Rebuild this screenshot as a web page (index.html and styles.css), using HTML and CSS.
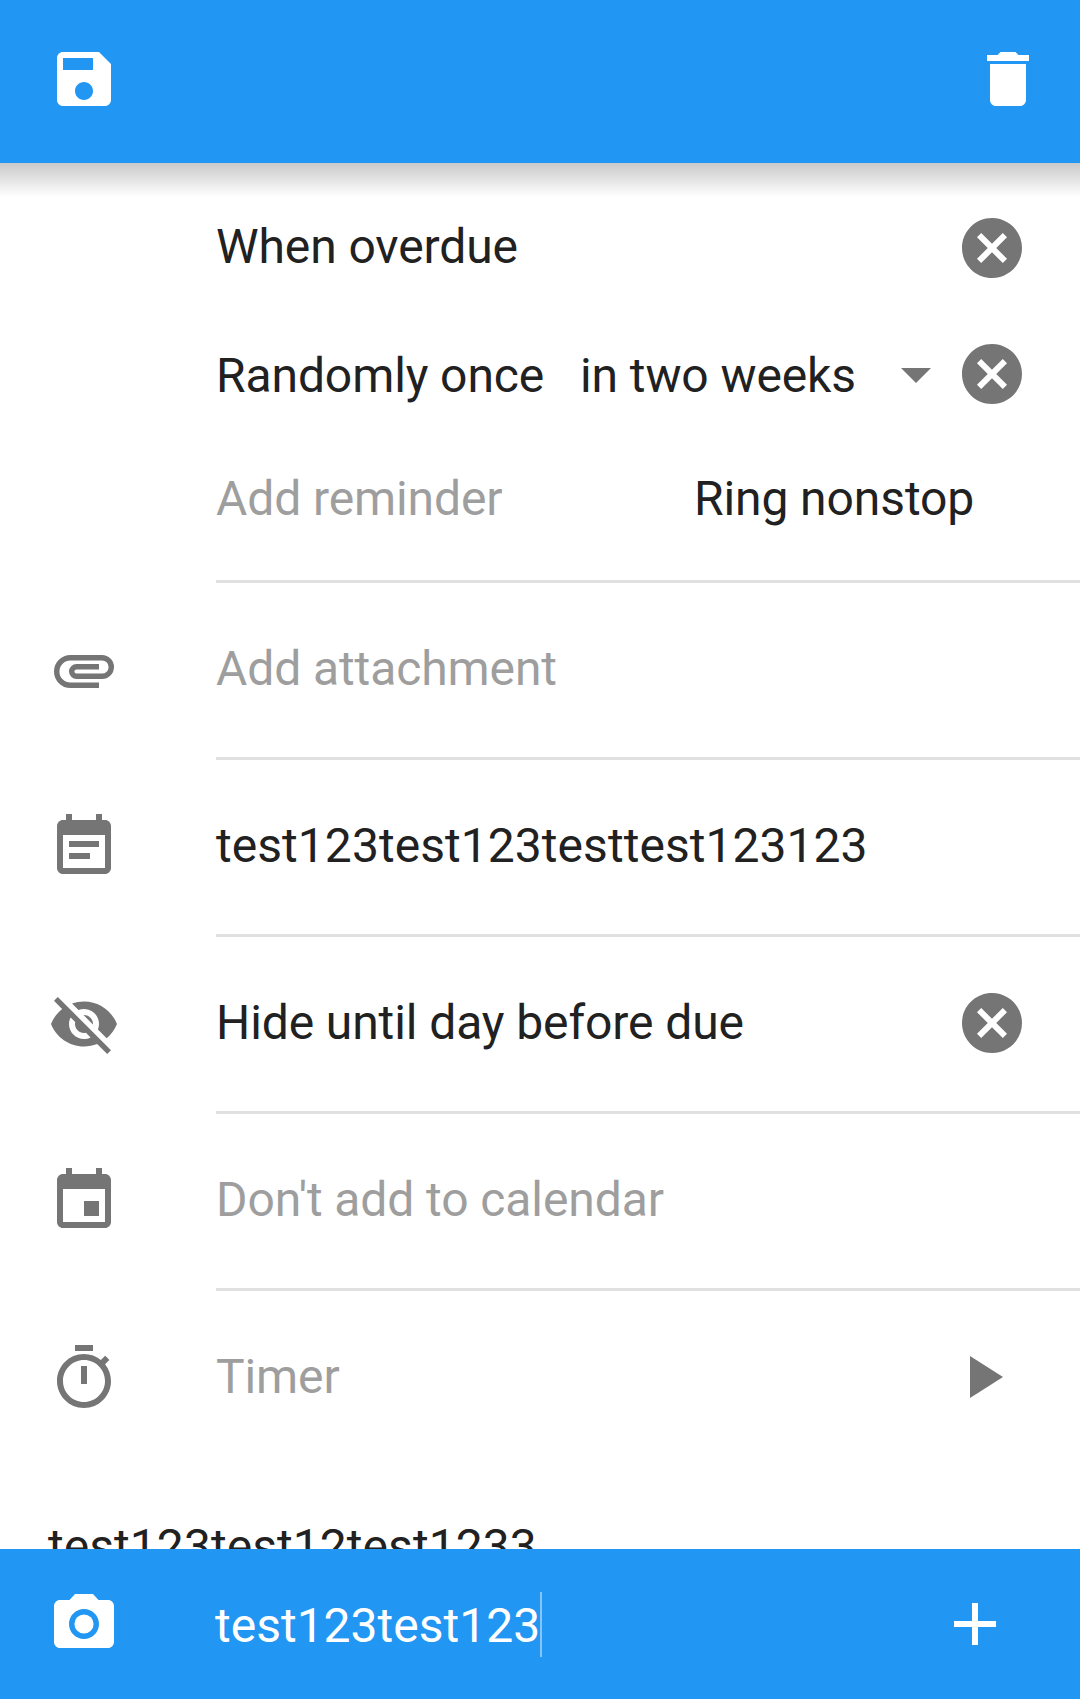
FILE: index.html
```html
<!DOCTYPE html>
<html lang="en">
<head>
    <meta charset="UTF-8">
    <meta name="viewport" content="width=device-width, initial-scale=1.0">
    <title>Edit task</title>
    <link rel="stylesheet" href="styles.css">
</head>
<body>
    <div class="page">
        <header class="toolbar">
            <svg class="icon icon-white" viewBox="0 0 24 24"><path d="M17 3H5c-1.11 0-2 .9-2 2v14c0 1.1.89 2 2 2h14c1.1 0 2-.9 2-2V7l-4-4zm-5 16c-1.66 0-3-1.34-3-3s1.34-3 3-3 3 1.34 3 3-1.34 3-3 3zm3-10H5V5h10v4z"/></svg>
            <svg class="icon icon-white" viewBox="0 0 24 24"><path d="M6 19c0 1.1.9 2 2 2h8c1.1 0 2-.9 2-2V7H6v12zM19 4h-3.5l-1-1h-5l-1 1H5v2h14V4z"/></svg>
        </header>

        <main class="content">
            <!-- Reminders -->
            <section class="reminders">
                <div class="reminder-row reminder-overdue">
                    <span class="label label-up">When overdue</span>
                    <svg class="icon clear" viewBox="0 0 24 24"><path d="M12 2C6.47 2 2 6.47 2 12s4.47 10 10 10 10-4.47 10-10S17.53 2 12 2zm5 13.59L15.59 17 12 13.41 8.41 17 7 15.59 10.59 12 7 8.41 8.41 7 12 10.59 15.59 7 17 8.41 13.41 12 17 15.59z"/></svg>
                </div>
                <div class="reminder-row reminder-random">
                    <span class="label label-down random-label">Randomly once</span>
                    <span class="label label-down">in two weeks</span>
                    <svg class="icon dropdown" viewBox="0 0 24 24"><path d="M7 10l5 5 5-5z"/></svg>
                    <svg class="icon" viewBox="0 0 24 24"><path d="M12 2C6.47 2 2 6.47 2 12s4.47 10 10 10 10-4.47 10-10S17.53 2 12 2zm5 13.59L15.59 17 12 13.41 8.41 17 7 15.59 10.59 12 7 8.41 8.41 7 12 10.59 15.59 7 17 8.41 13.41 12 17 15.59z"/></svg>
                </div>
                <div class="reminder-row reminder-add">
                    <span class="label hint add-label">Add reminder</span>
                    <span class="label">Ring nonstop</span>
                </div>
            </section>

            <div class="row">
                <svg class="icon clip" viewBox="0 0 24 24"><path d="M17 17.1H7.5a4.6 4.6 0 0 1 0-9.2H18a3.1 3.1 0 0 1 0 6.2H9.5a1.6 1.6 0 0 1 0-3.2H17"/></svg>
                <div class="row-body"><span class="label hint">Add attachment</span></div>
            </div>

            <div class="row">
                <svg class="icon" viewBox="0 0 24 24"><path d="M17 10H7v2h10v-2zm2-7h-1V1h-2v2H8V1H6v2H5c-1.11 0-1.99.9-1.99 2L3 19c0 1.1.89 2 2 2h14c1.1 0 2-.9 2-2V5c0-1.1-.9-2-2-2zm0 16H5V8h14v11zm-5-5H7v2h7v-2z"/></svg>
                <div class="row-body"><span class="label digits">test123test123testtest123123</span></div>
            </div>

            <div class="row">
                <svg class="icon" viewBox="0 0 24 24"><path d="M12 7c2.76 0 5 2.24 5 5 0 .65-.13 1.26-.36 1.83l2.92 2.92c1.51-1.26 2.7-2.89 3.43-4.75-1.73-4.39-6-7.5-11-7.5-1.4 0-2.74.25-3.98.7l2.16 2.16C10.74 7.13 11.35 7 12 7zM2 4.27l2.28 2.28.46.46C3.08 8.3 1.78 10.02 1 12c1.73 4.39 6 7.5 11 7.5 1.55 0 3.03-.3 4.38-.84l.42.42L19.73 22 21 20.73 3.27 3 2 4.27zM7.53 9.8l1.55 1.55c-.05.21-.08.43-.08.65 0 1.66 1.34 3 3 3 .22 0 .44-.03.65-.08l1.55 1.55c-.67.33-1.41.53-2.2.53-2.76 0-5-2.24-5-5 0-.79.2-1.53.53-2.2zm4.31-.78l3.15 3.15.02-.16c0-1.66-1.34-3-3-3l-.17.01z"/></svg>
                <div class="row-body">
                    <span class="label">Hide until day before due</span>
                    <svg class="icon clear" viewBox="0 0 24 24"><path d="M12 2C6.47 2 2 6.47 2 12s4.47 10 10 10 10-4.47 10-10S17.53 2 12 2zm5 13.59L15.59 17 12 13.41 8.41 17 7 15.59 10.59 12 7 8.41 8.41 7 12 10.59 15.59 7 17 8.41 13.41 12 17 15.59z"/></svg>
                </div>
            </div>

            <div class="row">
                <svg class="icon" viewBox="0 0 24 24"><path d="M17 12h-5v5h5v-5zM16 1v2H8V1H6v2H5c-1.11 0-1.99.9-1.99 2L3 19c0 1.1.89 2 2 2h14c1.1 0 2-.9 2-2V5c0-1.1-.9-2-2-2h-1V1h-2zm3 18H5V8h14v11z"/></svg>
                <div class="row-body"><span class="label hint">Don't add to calendar</span></div>
            </div>

            <div class="row">
                <svg class="icon" viewBox="0 0 24 24"><path d="M15 1H9v2h6V1zm-4 13h2V8h-2v6zm8.03-6.61l1.42-1.42c-.43-.51-.9-.99-1.41-1.41l-1.42 1.42C16.07 4.74 14.12 4 12 4c-4.97 0-9 4.03-9 9s4.02 9 9 9 9-4.03 9-9c0-2.12-.74-4.07-1.97-5.61zM12 20c-3.87 0-7-3.13-7-7s3.13-7 7-7 7 3.13 7 7-3.13 7-7 7z"/></svg>
                <div class="row-body row-last">
                    <span class="label hint">Timer</span>
                    <svg class="icon play" viewBox="0 0 24 24"><path d="M8 5v14l11-7z"/></svg>
                </div>
            </div>

            <p class="task-note">test123test12test1233</p>
        </main>

        <footer class="quick-add">
            <svg class="icon icon-white" viewBox="0 0 24 24"><path d="M9 2L7.17 4H4c-1.1 0-2 .9-2 2v12c0 1.1.9 2 2 2h16c1.1 0 2-.9 2-2V6c0-1.1-.9-2-2-2h-3.17L15 2H9zm3 15c-2.76 0-5-2.24-5-5s2.24-5 5-5 5 2.24 5 5-2.24 5-5 5z"/><circle cx="12" cy="12" r="3.2"/></svg>
            <div class="quick-input">test123test123<span class="caret"></span></div>
            <svg class="icon icon-white" viewBox="0 0 24 24"><path d="M19 13h-6v6h-2v-6H5v-2h6V5h2v6h6v2z"/></svg>
        </footer>
    </div>
</body>
</html>
```

FILE: styles.css
```css
html, body {
    margin: 0;
    padding: 0;
    background-color: #fff;
}

body {
    font-family: Roboto, "Noto Sans", sans-serif;
}

.page {
    display: flex;
    flex-direction: column;
    height: 1699px;
    overflow: hidden;
}

.icon {
    width: 72px;
    height: 72px;
    flex-shrink: 0;
    fill: #757575;
}

.icon-white {
    fill: #fff;
}

.clip {
    fill: none;
    stroke: #757575;
    stroke-width: 1.8;
}

.toolbar {
    position: relative;
    z-index: 1;
    display: flex;
    justify-content: space-between;
    height: 163px;
    box-sizing: border-box;
    padding: 43px 36px 0 48px;
    background-color: #2196f3;
}

.toolbar::after {
    content: "";
    position: absolute;
    top: 100%;
    left: 0;
    right: 0;
    height: 34px;
    background: linear-gradient(rgba(0, 0, 0, 0.21), rgba(0, 0, 0, 0));
}

.content {
    flex: 1;
    min-height: 0;
    overflow: hidden;
}

.label {
    font-size: 48px;
    line-height: 64px;
    letter-spacing: -0.1px;
    color: #212121;
    white-space: nowrap;
}

.label-up {
    padding-bottom: 3px;
}

.label-down {
    padding-top: 3px;
}

.digits {
    letter-spacing: 0.05px;
}

.hint {
    color: #9e9e9e;
}

/* Reminders */
.reminders {
    margin-left: 216px;
    padding-top: 21px;
    height: 396px;
    border-bottom: 3px solid #e0e0e0;
}

.reminder-row {
    display: flex;
    align-items: center;
    padding-right: 52px;
}

.reminder-overdue {
    height: 128px;
}

.reminder-random {
    height: 124px;
}

.reminder-add {
    height: 125px;
}

.random-label {
    width: 364px;
}

.add-label {
    width: 478px;
}

.dropdown {
    margin-left: auto;
    margin-right: 4px;
}

.clear {
    margin-left: auto;
}

/* Rows with a leading icon */
.row {
    display: flex;
    align-items: stretch;
    padding-left: 48px;
}

.row > .icon {
    align-self: center;
    margin-right: 96px;
    margin-bottom: 3px;
}

.row-body {
    flex: 1;
    display: flex;
    align-items: center;
    height: 172px;
    padding: 0 52px 2px 0;
    border-bottom: 3px solid #e0e0e0;
}

.row-last {
    border-bottom-color: transparent;
}

.play {
    margin-left: auto;
    margin-right: 10px;
}

.task-note {
    margin: 0 0 0 48px;
    padding-top: 47px;
    font-size: 48px;
    line-height: 64px;
    letter-spacing: 0.05px;
    color: #212121;
    white-space: nowrap;
}

/* Bottom bar */
.quick-add {
    display: flex;
    align-items: center;
    height: 150px;
    flex-shrink: 0;
    padding: 0 69px 0 48px;
    background-color: #2196f3;
}

.quick-input {
    flex: 1;
    display: flex;
    align-items: center;
    margin-left: 95px;
    padding-top: 3px;
    font-size: 48px;
    color: #fff;
}

.caret {
    width: 2px;
    height: 65px;
    margin-bottom: 3px;
    background-color: rgba(255, 255, 255, 0.45);
}
```
